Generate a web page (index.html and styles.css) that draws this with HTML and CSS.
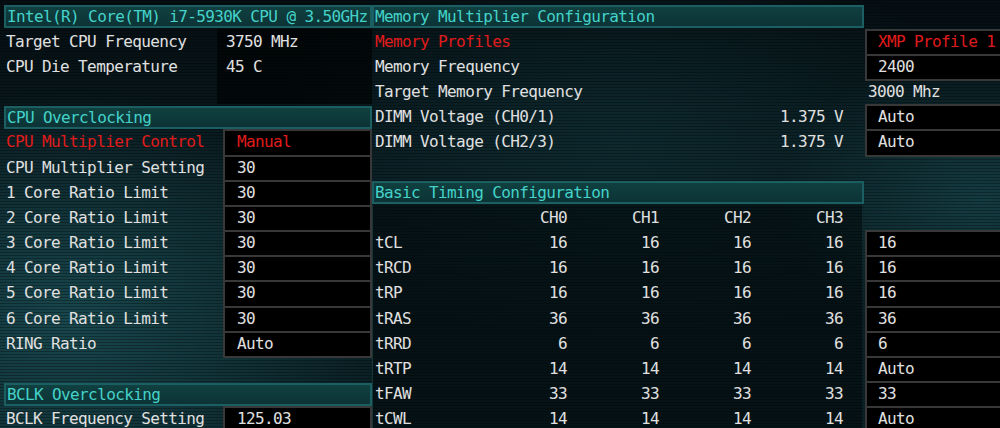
FILE: index.html
```html
<!DOCTYPE html>
<html>
<head>
<meta charset="utf-8">
<link rel="stylesheet" href="styles.css">
</head>
<body>
<div class="screen">
  <section class="left">
    <div class="hdr">Intel(R) Core(TM) i7-5930K CPU @ 3.50GHz</div>
    <div class="info">
      <div class="row"><span class="lbl">Target CPU Frequency</span><span class="ival">3750 MHz</span></div>
      <div class="row"><span class="lbl">CPU Die Temperature</span><span class="ival">45 C</span></div>
      <div class="row"><span class="lbl"></span><span class="ival"></span></div>
    </div>
    <div class="hdr">CPU Overclocking</div>
    <div class="list">
      <div class="row"><span class="lbl red">CPU Multiplier Control</span><span class="box red">Manual</span></div>
      <div class="row"><span class="lbl">CPU Multiplier Setting</span><span class="box">30</span></div>
      <div class="row"><span class="lbl">1 Core Ratio Limit</span><span class="box">30</span></div>
      <div class="row"><span class="lbl">2 Core Ratio Limit</span><span class="box">30</span></div>
      <div class="row"><span class="lbl">3 Core Ratio Limit</span><span class="box">30</span></div>
      <div class="row"><span class="lbl">4 Core Ratio Limit</span><span class="box">30</span></div>
      <div class="row"><span class="lbl">5 Core Ratio Limit</span><span class="box">30</span></div>
      <div class="row"><span class="lbl">6 Core Ratio Limit</span><span class="box">30</span></div>
      <div class="row"><span class="lbl">RING Ratio</span><span class="box last">Auto</span></div>
    </div>
    <div class="hdr bclk">BCLK Overclocking</div>
    <div class="list">
      <div class="row"><span class="lbl">BCLK Frequency Setting</span><span class="box">125.03</span></div>
    </div>
  </section>

  <section class="right">
    <div class="hdr rhdr">Memory Multiplier Configuration</div>
    <div class="rlist">
      <div class="rrow"><div class="rl red">Memory Profiles</div><div class="rbox red">XMP Profile 1</div></div>
      <div class="rrow"><div class="rl">Memory Frequency</div><div class="rbox last">2400</div></div>
      <div class="rrow"><div class="rl">Target Memory Frequency</div><div class="rplain">3000 Mhz</div></div>
      <div class="rrow"><div class="rl split"><span>DIMM Voltage (CH0/1)</span><span>1.375 V</span></div><div class="rbox">Auto</div></div>
      <div class="rrow"><div class="rl split"><span>DIMM Voltage (CH2/3)</span><span>1.375 V</span></div><div class="rbox last">Auto</div></div>
      <div class="rrow"><div class="rl"></div><div></div></div>
    </div>
    <div class="hdr rhdr">Basic Timing Configuration</div>
    <div class="timing">
      <div class="rrow"><div class="tl"><span></span><span>CH0</span><span>CH1</span><span>CH2</span><span>CH3</span></div><div></div></div>
      <div class="rrow"><div class="tl"><span>tCL</span><span>16</span><span>16</span><span>16</span><span>16</span></div><div class="rbox">16</div></div>
      <div class="rrow"><div class="tl"><span>tRCD</span><span>16</span><span>16</span><span>16</span><span>16</span></div><div class="rbox">16</div></div>
      <div class="rrow"><div class="tl"><span>tRP</span><span>16</span><span>16</span><span>16</span><span>16</span></div><div class="rbox">16</div></div>
      <div class="rrow"><div class="tl"><span>tRAS</span><span>36</span><span>36</span><span>36</span><span>36</span></div><div class="rbox">36</div></div>
      <div class="rrow"><div class="tl"><span>tRRD</span><span>6</span><span>6</span><span>6</span><span>6</span></div><div class="rbox">6</div></div>
      <div class="rrow"><div class="tl"><span>tRTP</span><span>14</span><span>14</span><span>14</span><span>14</span></div><div class="rbox">Auto</div></div>
      <div class="rrow"><div class="tl"><span>tFAW</span><span>33</span><span>33</span><span>33</span><span>33</span></div><div class="rbox">33</div></div>
      <div class="rrow"><div class="tl"><span>tCWL</span><span>14</span><span>14</span><span>14</span><span>14</span></div><div class="rbox">Auto</div></div>
    </div>
  </section>
</div>
</body>
</html>
```

FILE: styles.css
```css
:root {
  --p: 25.2px;
}
html, body {
  margin: 0;
  padding: 0;
}
body {
  width: 1000px;
  height: 428px;
  overflow: hidden;
  font-family: "DejaVu Sans Mono", "Liberation Mono", monospace;
  font-size: 16px;
  letter-spacing: -0.62px;
  color: #e0e0e0;
  background-color: #061217;
  background-image:
    repeating-linear-gradient(to bottom, rgba(0,0,0,0.3) 0 1px, rgba(0,0,0,0) 1px 3px),
    radial-gradient(ellipse 300px 230px at 70px 320px, rgba(28,84,90,0.75), rgba(28,84,90,0) 100%),
    radial-gradient(ellipse 200px 150px at 980px 200px, rgba(24,72,78,0.7), rgba(24,72,78,0) 100%),
    radial-gradient(ellipse 360px 200px at 620px 140px, rgba(18,58,64,0.5), rgba(18,58,64,0) 100%),
    linear-gradient(to bottom, #050e12 0, #0a1d22 45%, #0b2227 100%);
}
.screen {
  display: flex;
  width: 1000px;
  height: 428px;
  overflow: hidden;
}
.red { color: #e01b1b; }

.hdr {
  box-sizing: border-box;
  flex: none;
  height: 23px;
  min-height: 0;
  line-height: 19px;
  margin: 1.6px 0 0.6px 0;
  border: 2px solid #1c5f62;
  background: linear-gradient(to bottom, #10403f, #0c3336);
  color: #44d2c9;
  padding-left: 1px;
  white-space: nowrap;
  overflow: hidden;
}

/* left panel */
.left {
  width: 372px;
  flex: none;
  display: flex;
  flex-direction: column;
  padding-top: 3.4px;
}
.left > .hdr {
  margin-left: 4px;
  width: 368px;
}
.left > .hdr.bclk { margin-top: calc(1.6px + var(--p)); }
.info, .list, .rlist, .timing { flex: none; }
.row {
  display: flex;
  height: var(--p);
  align-items: stretch;
}
.lbl {
  width: 217px;
  padding-left: 6px;
  box-sizing: border-box;
  line-height: var(--p);
  white-space: nowrap;
}
.ival {
  flex: 1;
  padding-left: 9px;
  line-height: var(--p);
  box-sizing: border-box;
  background: rgba(0,0,0,0.6);
}
.list .lbl { width: 223px; }
.box {
  flex: 1;
  box-sizing: border-box;
  border: 2px solid #383838;
  border-bottom: none;
  background: #000;
  padding-left: 12px;
  line-height: 22px;
}
.box.last {
  border-bottom: 2px solid #383838;
  height: calc(var(--p) + 2px);
}

/* right panel */
.right {
  flex: 1;
  display: flex;
  flex-direction: column;
  padding-top: 3.4px;
}
.rhdr {
  width: 492px;
}
.rrow {
  display: grid;
  grid-template-columns: 493px 1fr;
  height: var(--p);
}
.rl {
  padding-left: 3px;
  line-height: var(--p);
  white-space: nowrap;
}
.rl.split {
  display: flex;
  justify-content: space-between;
  padding-right: 22px;
}
.rbox {
  box-sizing: border-box;
  border: 2px solid #383838;
  border-bottom: none;
  border-right: none;
  background: #000;
  padding-left: 11px;
  line-height: 22px;
  white-space: nowrap;
}
.rbox.last {
  border-bottom: 2px solid #383838;
  height: calc(var(--p) + 2px);
}
.rplain {
  padding-left: 3px;
  line-height: var(--p);
}
.tl {
  display: grid;
  grid-template-columns: 102px repeat(4, 92px) 1fr;
  line-height: var(--p);
  box-sizing: border-box;
  background: rgba(2,8,10,0.55);
  border-left: 1px solid #16363a;
  margin-right: 3px;
}
.tl span { text-align: right; }
.tl span:first-child {
  text-align: left;
  padding-left: 2px;
}
.timing .rrow:last-child .rbox { border-bottom: 2px solid #383838; }
```
